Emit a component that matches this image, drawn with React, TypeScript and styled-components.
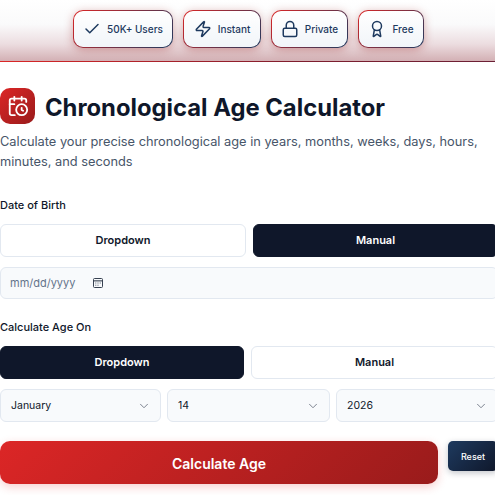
import React from "react";
import styled, { createGlobalStyle } from "styled-components";
import { Check, Zap, Lock, Award, CalendarClock, ChevronDown } from "lucide-react";

const Global = createGlobalStyle`
  html, body { margin: 0; padding: 0; background: #fff; overflow: hidden; }
  * { box-sizing: border-box; }
  body { font-family: Inter, "Liberation Sans", sans-serif; color: #0f172a; }
`;

const Page = styled.div`
  width: 495px;
  height: 495px;
  overflow: hidden;
`;

const Strip = styled.div`
  height: 62px;
  padding: 10px 0 0 73px;
  display: flex;
  gap: 10px;
  background: linear-gradient(180deg, #ffffff 0%, #fafafb 40%, #ecdde0 72%, #d3b0b4 100%);
  border-bottom: 1px solid;
  border-image: linear-gradient(90deg, #dc2626, #7f1d2d 60%, #6b2035) 1;
`;

const Badge = styled.div<{ $w: number }>`
  width: ${(p) => p.$w}px;
  height: 38px;
  padding-bottom: 1px;
  display: flex;
  align-items: center;
  justify-content: center;
  gap: 6px;
  font-size: 10px;
  font-weight: 500;
  color: #1e3a5f;
  border: 1.5px solid transparent;
  border-radius: 10px;
  background: linear-gradient(180deg, #ffffff, #f1f5f9) padding-box,
    linear-gradient(135deg, #dc2626, #1e3a5f) border-box;
  box-shadow: 0 2px 10px rgba(153, 27, 27, 0.35);
`;

const Main = styled.main`
  width: 498px;
  padding-top: 26px;
`;

const TitleRow = styled.div`
  display: flex;
  align-items: center;
  gap: 10px;
  height: 36px;
`;

const Logo = styled.div`
  width: 35px;
  height: 36px;
  border-radius: 10px;
  background: linear-gradient(135deg, #dc2626, #991b1b);
  color: #fff;
  display: flex;
  align-items: center;
  justify-content: center;
`;

const Title = styled.h1`
  margin: 3px 0 0;
  font-size: 23.8px;
  line-height: 33px;
  font-weight: 700;
  color: #0f172a;
  white-space: nowrap;
`;

const Lead = styled.p`
  margin: 8px 0 0;
  width: 495px;
  font-size: 12.8px;
  line-height: 19.5px;
  color: #475569;
`;

const Label = styled.div<{ $top: number }>`
  margin-top: ${(p) => p.$top}px;
  height: 16px;
  font-size: 11px;
  line-height: 16px;
  font-weight: 500;
  color: #0f172a;
`;

const Toggle = styled.div<{ $left: number }>`
  margin-top: 11px;
  display: grid;
  grid-template-columns: ${(p) => p.$left}px 1fr;
  gap: 7px;
`;

const ToggleButton = styled.div<{ $active?: boolean }>`
  height: 33px;
  padding-bottom: 2px;
  display: flex;
  align-items: center;
  justify-content: center;
  font-size: 11px;
  font-weight: 600;
  border-radius: 6px;
  color: ${(p) => (p.$active ? "#fff" : "#0f172a")};
  background: ${(p) => (p.$active ? "#0f172a" : "#fff")};
  border: 1px solid ${(p) => (p.$active ? "#0f172a" : "#e2e8f0")};
`;

const DateBox = styled.div`
  margin-top: 10px;
  height: 32px;
  display: flex;
  align-items: center;
  gap: 17px;
  padding-left: 9px;
  background: #f8fafc;
  border: 1px solid #e2e8f0;
  border-radius: 6px;
  font-size: 11px;
  color: #64748b;
  svg { color: #374151; }
`;

const Selects = styled.div`
  margin-top: 10px;
  display: grid;
  grid-template-columns: 161px 163px 1fr;
  gap: 6px;
`;

const SelectBox = styled.div`
  height: 33px;
  display: flex;
  align-items: center;
  justify-content: space-between;
  padding: 0 9px 0 10px;
  font-size: 10.5px;
  color: #0f172a;
  background: #f8fafc;
  border: 1px solid #e2e8f0;
  border-radius: 6px;
  svg { color: #6b7280; }
`;

const Actions = styled.div`
  margin-top: 19px;
  display: flex;
  align-items: flex-start;
  gap: 10px;
`;

const Calc = styled.div`
  flex: 0 0 438px;
  height: 43px;
  padding-top: 2px;
  display: flex;
  align-items: center;
  justify-content: center;
  font-size: 14px;
  font-weight: 600;
  color: #fff;
  border-radius: 10px;
  background: linear-gradient(135deg, #dc2626, #991b1b);
  box-shadow: 0 3px 10px rgba(220, 38, 38, 0.22);
`;

const Reset = styled.div`
  flex: 0 0 50px;
  height: 30px;
  display: flex;
  align-items: center;
  justify-content: center;
  font-size: 9px;
  font-weight: 500;
  color: #fff;
  border-radius: 5px;
  background: linear-gradient(135deg, #1e3a5f, #0f172a);
  box-shadow: 0 2px 6px rgba(15, 23, 42, 0.25);
`;

const PickerIcon = () => (
  <svg width="12" height="12" viewBox="0 0 12 12" fill="none" stroke="currentColor" strokeWidth="1">
    <rect x="1.5" y="1.5" width="9" height="9" rx="1" />
    <path d="M1.5 3.8h9" strokeWidth="1.6" opacity="0.7" />
    <path d="M3 6h1.4M5.3 6h1.4M7.6 6H9M3 8.2h1.4M5.3 8.2h1.4" opacity="0.6" />
  </svg>
);

export default function App() {
  return (
    <Page>
      <Global />
      <Strip>
        <Badge $w={100}><Check size={18} strokeWidth={2} />50K+ Users</Badge>
        <Badge $w={78}><Zap size={18} strokeWidth={2} />Instant</Badge>
        <Badge $w={77}><Lock size={18} strokeWidth={2} />Private</Badge>
        <Badge $w={66}><Award size={18} strokeWidth={2} />Free</Badge>
      </Strip>
      <Main>
        <TitleRow>
          <Logo><CalendarClock size={22} strokeWidth={2} /></Logo>
          <Title>Chronological Age Calculator</Title>
        </TitleRow>
        <Lead>
          Calculate your precise chronological age in years, months, weeks, days, hours, minutes, and seconds
        </Lead>
        <Label $top={26}>Date of Birth</Label>
        <Toggle $left={246}>
          <ToggleButton>Dropdown</ToggleButton>
          <ToggleButton $active>Manual</ToggleButton>
        </Toggle>
        <DateBox>mm/dd/yyyy<PickerIcon /></DateBox>
        <Label $top={20}>Calculate Age On</Label>
        <Toggle $left={244}>
          <ToggleButton $active>Dropdown</ToggleButton>
          <ToggleButton>Manual</ToggleButton>
        </Toggle>
        <Selects>
          <SelectBox>January<ChevronDown size={14} strokeWidth={1.5} /></SelectBox>
          <SelectBox>14<ChevronDown size={14} strokeWidth={1.5} /></SelectBox>
          <SelectBox>2026<ChevronDown size={14} strokeWidth={1.5} /></SelectBox>
        </Selects>
        <Actions>
          <Calc>Calculate Age</Calc>
          <Reset>Reset</Reset>
        </Actions>
      </Main>
    </Page>
  );
}
